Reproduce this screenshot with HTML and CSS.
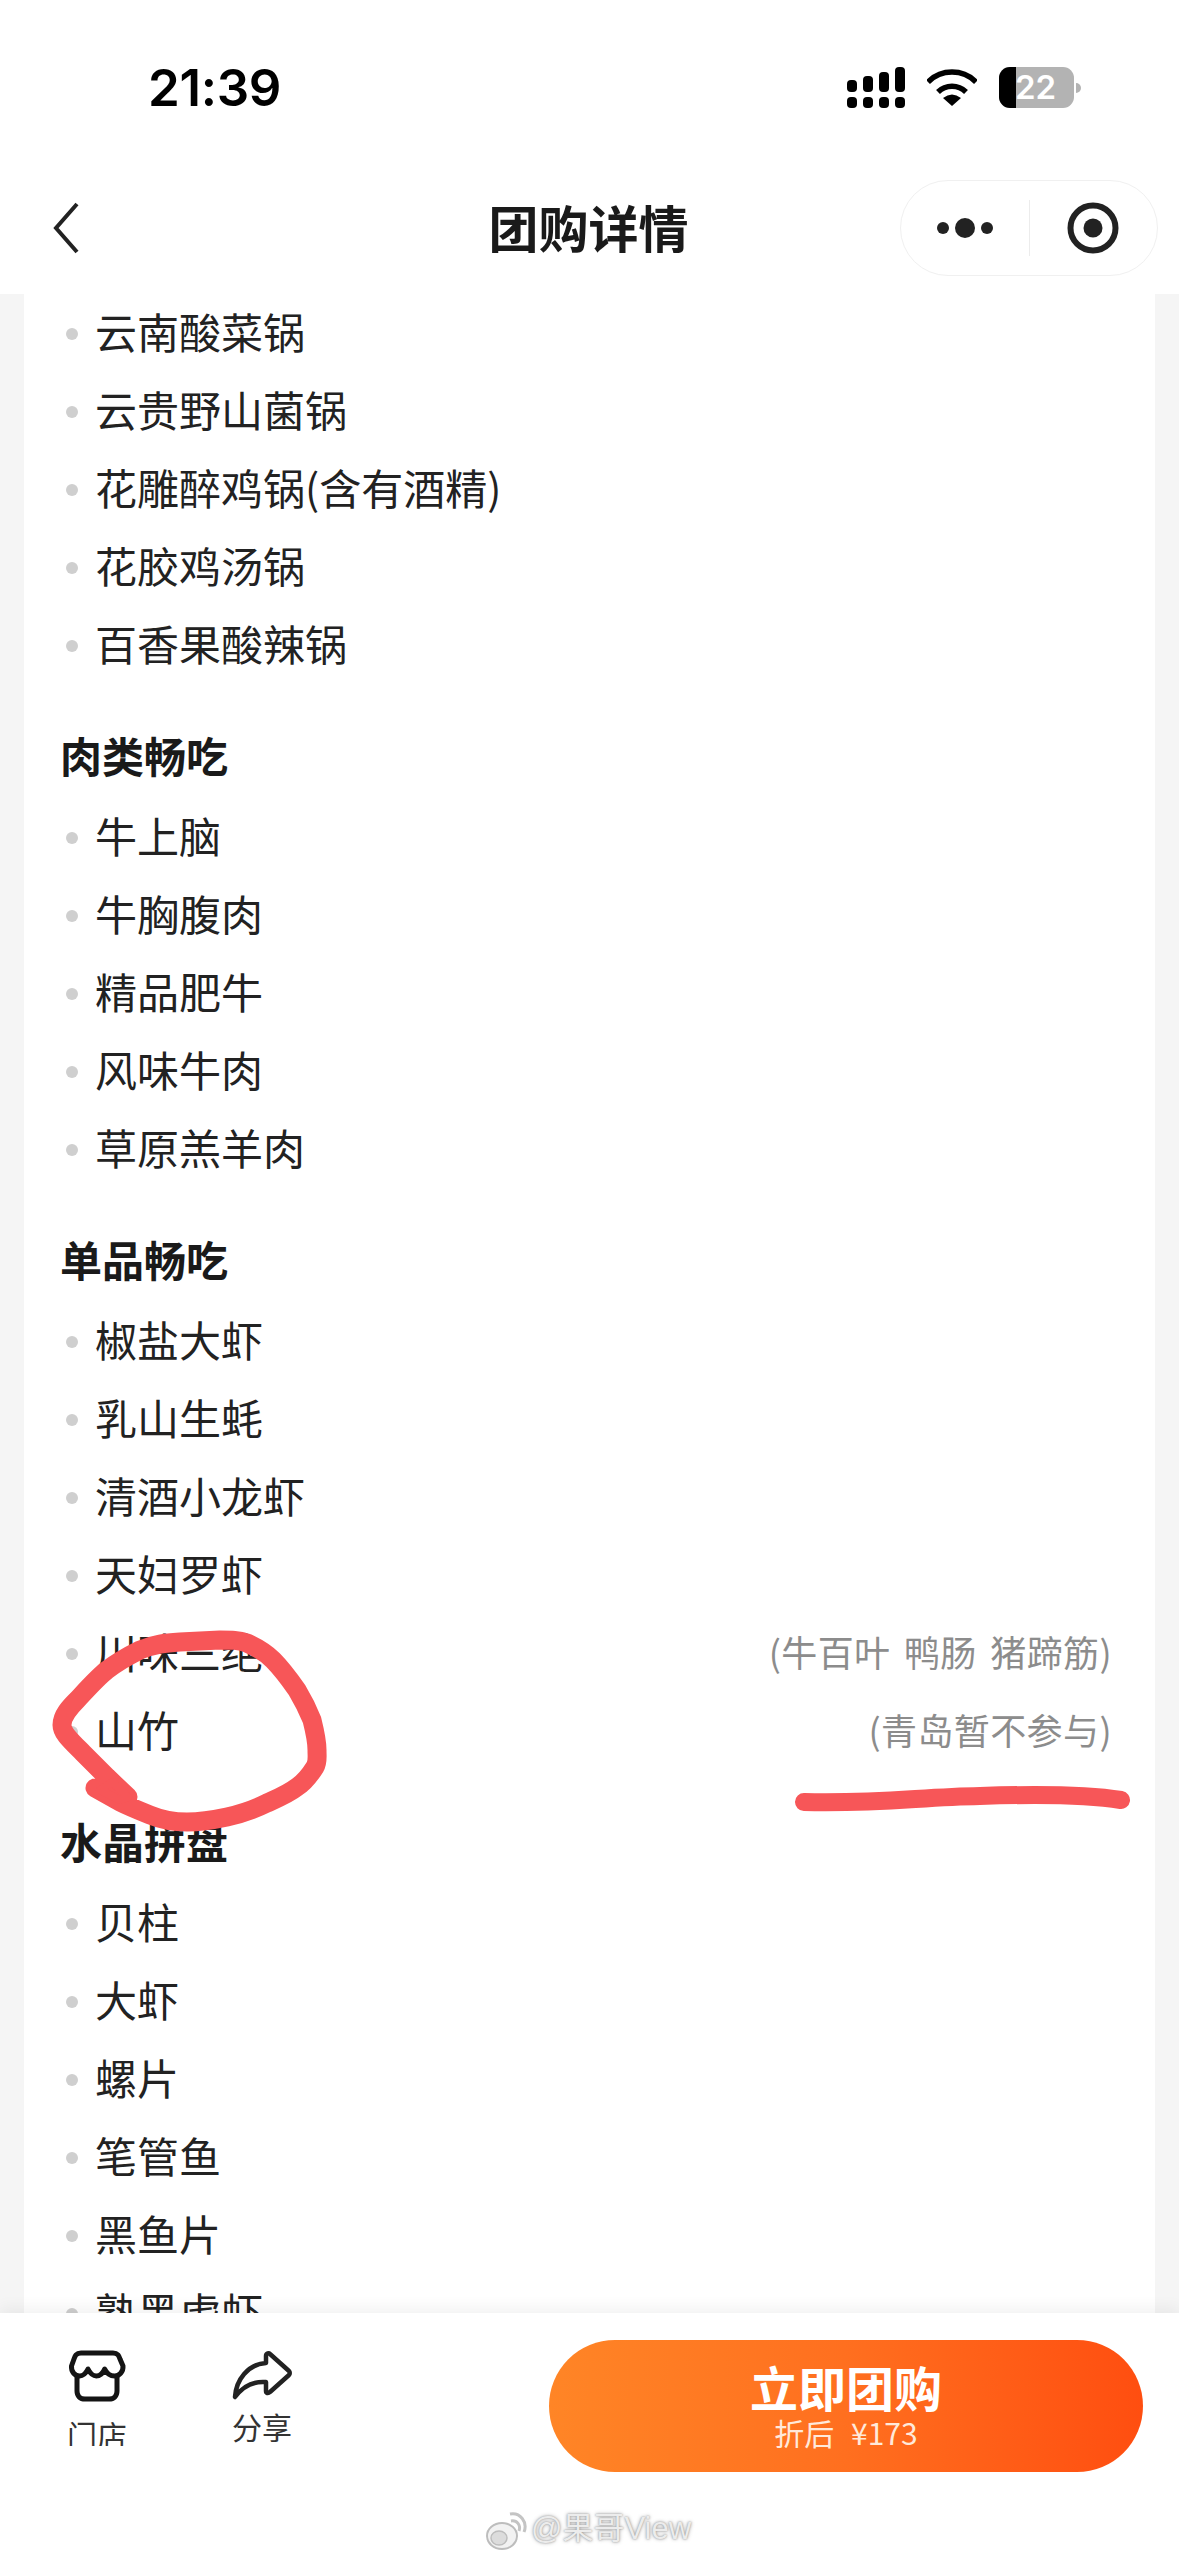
FILE: index.html
```html
<!DOCTYPE html>
<html>
<head>
    <meta charset="utf-8">
    <title>团购详情</title>
    <link rel="stylesheet" href="styles.css">
</head>
<body>
<div class="page">
    <div class="status-bar">
        <div class="time">21:39</div>
        <div class="status-icons">
            <svg class="signal" width="58" height="41" viewBox="0 0 58 41">
                <rect x="0" y="13" width="10" height="12" rx="4"/>
                <rect x="16" y="9" width="10" height="16" rx="4"/>
                <rect x="32" y="5" width="10" height="20" rx="4"/>
                <rect x="48" y="0" width="10" height="25" rx="4"/>
                <rect x="0" y="30" width="10" height="11" rx="4"/>
                <rect x="16" y="30" width="10" height="11" rx="4"/>
                <rect x="32" y="30" width="10" height="11" rx="4"/>
                <rect x="48" y="30" width="10" height="11" rx="4"/>
            </svg>
            <svg class="wifi" width="50" height="37" viewBox="0 0 50 37">
                <path d="M1 13A34 34 0 0 1 49 13" fill="none" stroke="#000" stroke-width="5.5"/>
                <path d="M11 23A20 20 0 0 1 39 23" fill="none" stroke="#000" stroke-width="5.5"/>
                <path d="M16 29Q25 22 34 29L25 37Z"/>
            </svg>
            <div class="battery">
                <div class="battery-body">
                    <div class="battery-level"></div>
                    <span class="battery-num">22</span>
                </div>
                <div class="battery-tip"></div>
            </div>
        </div>
    </div>

    <div class="nav-bar">
        <svg class="back" width="26" height="52" viewBox="0 0 26 52">
            <path d="M24 2L3 26L24 50" fill="none" stroke="#222" stroke-width="4"/>
        </svg>
        <div class="nav-title">团购详情</div>
        <div class="capsule">
            <div class="capsule-part">
                <svg width="56" height="20" viewBox="0 0 56 20">
                    <circle cx="6" cy="10" r="6"/>
                    <circle cx="28" cy="10" r="10"/>
                    <circle cx="50" cy="10" r="6"/>
                </svg>
            </div>
            <div class="capsule-line"></div>
            <div class="capsule-part">
                <svg width="52" height="52" viewBox="0 0 52 52">
                    <circle cx="26" cy="26" r="22.5" fill="none" stroke="#222" stroke-width="6"/>
                    <circle cx="26" cy="26" r="9.5"/>
                </svg>
            </div>
        </div>
    </div>

    <div class="content">
        <div class="card">
            <div class="row"><span class="dot"></span><span class="name">云南酸菜锅</span></div>
            <div class="row"><span class="dot"></span><span class="name">云贵野山菌锅</span></div>
            <div class="row"><span class="dot"></span><span class="name">花雕醉鸡锅(含有酒精)</span></div>
            <div class="row"><span class="dot"></span><span class="name">花胶鸡汤锅</span></div>
            <div class="row"><span class="dot"></span><span class="name">百香果酸辣锅</span></div>

            <div class="section-title">肉类畅吃</div>
            <div class="row"><span class="dot"></span><span class="name">牛上脑</span></div>
            <div class="row"><span class="dot"></span><span class="name">牛胸腹肉</span></div>
            <div class="row"><span class="dot"></span><span class="name">精品肥牛</span></div>
            <div class="row"><span class="dot"></span><span class="name">风味牛肉</span></div>
            <div class="row"><span class="dot"></span><span class="name">草原羔羊肉</span></div>

            <div class="section-title">单品畅吃</div>
            <div class="row"><span class="dot"></span><span class="name">椒盐大虾</span></div>
            <div class="row"><span class="dot"></span><span class="name">乳山生蚝</span></div>
            <div class="row"><span class="dot"></span><span class="name">清酒小龙虾</span></div>
            <div class="row"><span class="dot"></span><span class="name">天妇罗虾</span></div>
            <div class="row"><span class="dot"></span><span class="name">川味三绝</span><span class="note">(牛百叶 鸭肠 猪蹄筋)</span></div>
            <div class="row"><span class="dot"></span><span class="name">山竹</span><span class="note">(青岛暂不参与)</span></div>

            <div class="section-title">水晶拼盘</div>
            <div class="row"><span class="dot"></span><span class="name">贝柱</span></div>
            <div class="row"><span class="dot"></span><span class="name">大虾</span></div>
            <div class="row"><span class="dot"></span><span class="name">螺片</span></div>
            <div class="row"><span class="dot"></span><span class="name">笔管鱼</span></div>
            <div class="row"><span class="dot"></span><span class="name">黑鱼片</span></div>
            <div class="row"><span class="dot"></span><span class="name">熟黑虎虾</span></div>
        </div>
    </div>

    <div class="footer">
        <div class="tool tool-store">
            <svg width="58" height="53" viewBox="0 0 58 53">
                <path d="M13 4H45C50 4 51 7 52 10L55 17C55.5 23 51 27 46.7 27C42 27 38.5 24 36.7 20C35 24 32 27 28.3 27C24.5 27 22 24 20 20C18 24 15.5 27 11.7 27C7 27 3 23 3.5 17L6 10C7 7 8 4 13 4Z" fill="none" stroke="#141414" stroke-width="5" stroke-linejoin="round"/>
                <path d="M9 27V42C9 47 12 50 17 50H41C46 50 49 47 49 42V27" fill="none" stroke="#141414" stroke-width="5"/>
            </svg>
            <div class="tool-label tool-label-cut">门店</div>
        </div>
        <div class="tool tool-share">
            <svg width="62" height="50" viewBox="0 0 62 50">
                <path d="M35 13V6C35 3 38 3 39 4L58 21C59 22 59 24 58 25L39 42C37 44 35 43 35 41V32C22 31 12 36 4 47C5 30 17 14 35 13Z" fill="none" stroke="#222" stroke-width="4.5" stroke-linejoin="round"/>
            </svg>
            <div class="tool-label">分享</div>
        </div>
        <div class="buy-btn">
            <div class="buy-title">立即团购</div>
            <div class="buy-sub">折后 ¥173</div>
        </div>
    </div>

    <!-- red marker scribbles on top of the screenshot -->
    <svg class="marks" width="1179" height="2556" viewBox="0 0 1179 2556">
        <path d="M128 1797L107 1777L83 1753C70 1740 62 1733 62 1725C62 1715 70 1707 77 1700C90 1686 98 1677 107 1670C120 1660 130 1655 140 1650C155 1644 165 1643 180 1642L220 1640C232 1640 238 1640 247 1643C258 1648 265 1652 273 1660C283 1670 290 1680 297 1690C303 1700 308 1710 312 1720C315 1732 317 1740 317 1750C317 1758 318 1762 315 1767C310 1775 305 1782 297 1787C288 1794 278 1798 267 1803C255 1809 240 1814 227 1817C213 1820 200 1822 187 1822C173 1822 162 1820 150 1815C140 1811 130 1807 120 1802L95 1788" fill="none" stroke="#f75658" stroke-width="19" stroke-linecap="round" stroke-linejoin="round"/>
        <path d="M112 1782L128 1797L120 1800L100 1790Z" fill="#f75658" stroke="#f75658" stroke-width="8" stroke-linejoin="round"/>
        <path d="M804 1802C880 1804 920 1797 980 1796C1040 1794 1090 1795 1121 1800" fill="none" stroke="#f75658" stroke-width="18" stroke-linecap="round"/>
    </svg>

    <div class="watermark">
        <svg class="watermark-logo" width="42" height="42" viewBox="0 0 42 42">
            <ellipse cx="17" cy="26" rx="15" ry="13" fill="#f2f2f2" stroke="#bdbdbd" stroke-width="2"/>
            <ellipse cx="14" cy="28" rx="8" ry="7" fill="#dcdcdc" stroke="#bdbdbd" stroke-width="1.5"/>
            <path d="M26 11C32 10 36 15 34 21" fill="none" stroke="#c4c4c4" stroke-width="3"/>
            <path d="M25 4C35 2 43 12 39 22" fill="none" stroke="#c4c4c4" stroke-width="3"/>
        </svg>
        <span>@果哥View</span>
    </div>
</div>
</body>
</html>
```

FILE: styles.css
```css
html, body {
    margin: 0;
    padding: 0;
}
body {
    font-family: "Noto Sans CJK SC", "Noto Sans", sans-serif;
    color: #222;
    background: #f5f5f5;
}
.page {
    position: relative;
    width: 1179px;
    height: 2556px;
    display: flex;
    flex-direction: column;
    overflow: hidden;
}

/* status bar */
.status-bar {
    height: 180px;
    flex-shrink: 0;
    box-sizing: border-box;
    background: #fff;
    display: flex;
    justify-content: space-between;
    padding: 67px 98px 0 148px;
}
.time {
    font-family: Inter, sans-serif;
    font-weight: 600;
    font-size: 51px;
    line-height: 41px;
    letter-spacing: -0.3px;
    color: #000;
}
.status-icons {
    display: flex;
    gap: 22px;
    align-items: flex-start;
}
.wifi {
    margin-top: 2px;
}
.battery {
    display: flex;
    align-items: center;
    gap: 2px;
}
.battery-body {
    position: relative;
    width: 75px;
    height: 41px;
    border-radius: 11px;
    background: #b3b3b3;
    overflow: hidden;
}
.battery-level {
    width: 17px;
    height: 41px;
    background: #000;
}
.battery-num {
    position: absolute;
    left: 16px;
    top: 0;
    font-family: Inter, sans-serif;
    font-weight: 600;
    font-size: 33px;
    line-height: 41px;
    color: #fff;
}
.battery-tip {
    width: 5px;
    height: 10px;
    background: #b3b3b3;
    border-radius: 0 5px 5px 0;
}

/* nav */
.nav-bar {
    height: 114px;
    flex-shrink: 0;
    box-sizing: border-box;
    background: #fff;
    display: grid;
    grid-template-columns: 1fr auto 1fr;
    align-items: center;
    padding: 0 21px 18px 53px;
}
.nav-title {
    font-size: 50px;
    font-weight: 700;
    line-height: 92px;
    padding-bottom: 4px;
    color: #1a1a1a;
    margin-left: -34px;
}
.capsule {
    justify-self: end;
    width: 258px;
    height: 96px;
    box-sizing: border-box;
    border: 1px solid #f0f0f0;
    border-radius: 48px;
    display: flex;
    align-items: center;
}
.capsule svg {
    fill: #222;
    display: block;
}
.capsule-part {
    flex: 1;
    display: flex;
    justify-content: center;
}
.capsule-line {
    width: 1px;
    height: 56px;
    background: #ececec;
}

/* list */
.content {
    flex: 1;
    min-height: 0;
    overflow: hidden;
    padding: 0 24px;
}
.card {
    background: #fff;
    padding: 1px 43px 0 36px;
}
.row {
    height: 78px;
    display: flex;
    align-items: center;
    font-size: 42px;
    line-height: 72px;
}
.dot {
    width: 12px;
    height: 12px;
    margin: 0 17px 0 6px;
    border-radius: 50%;
    background: #cfcfcf;
}
.name {
    color: #222;
    padding-bottom: 6px;
}
.note {
    margin-left: auto;
    padding-bottom: 6px;
    font-size: 36px;
    letter-spacing: 0.4px;
    color: #8c8c8c;
    word-spacing: 5px;
}
.section-title {
    height: 78px;
    margin: 34px 0 2px;
    font-size: 42px;
    font-weight: 700;
    line-height: 72px;
    color: #1a1a1a;
}

/* footer */
.footer {
    position: relative;
    height: 243px;
    flex-shrink: 0;
    box-sizing: border-box;
    background: #fff;
    box-shadow: 0 -6px 14px rgba(0, 0, 0, 0.05);
    display: flex;
    align-items: flex-start;
    padding: 0 36px 0 68px;
}
.tool {
    display: flex;
    flex-direction: column;
    align-items: center;
    width: 58px;
}
.tool svg {
    display: block;
    flex-shrink: 0;
}
.tool-store {
    padding-top: 36px;
}
.tool-share {
    padding-top: 37px;
    margin-left: 107px;
}
.tool-label {
    font-size: 30px;
    line-height: 36px;
    color: #333;
    margin-top: 8px;
    white-space: nowrap;
}
.tool-label-cut {
    height: 30px;
    overflow: hidden;
    margin-top: 14px;
}
.buy-btn {
    margin: 27px 0 0 auto;
    width: 594px;
    height: 132px;
    border-radius: 66px;
    background: linear-gradient(90deg, #ff8526 0%, #ff6f1f 50%, #ff4e10 100%);
    color: #fff;
    text-align: center;
}
.buy-title {
    font-size: 48px;
    font-weight: 700;
    line-height: 50px;
    padding-top: 21px;
}
.buy-sub {
    font-size: 30px;
    line-height: 36px;
    margin-top: 3px;
    word-spacing: 10px;
    color: #ffe9da;
}

.marks {
    position: absolute;
    left: 0;
    top: 0;
    pointer-events: none;
}
.watermark {
    position: absolute;
    left: 485px;
    top: 2510px;
    display: flex;
    align-items: flex-start;
    gap: 4px;
    font-family: "Liberation Sans", "Noto Sans CJK SC", sans-serif;
    font-size: 31px;
    line-height: 38px;
    color: #ececec;
    text-shadow: 0 0 2px #8f8f8f, 0 0 4px #b5b5b5;
}
.watermark-logo {
    filter: blur(0.4px);
}
```
